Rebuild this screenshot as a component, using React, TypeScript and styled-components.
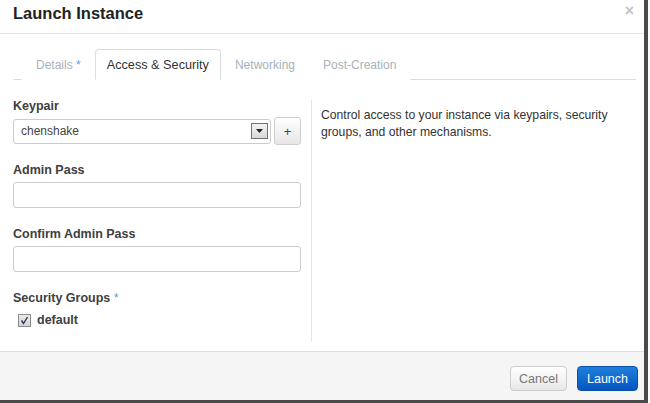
import styled, { createGlobalStyle } from 'styled-components';

const GlobalStyle = createGlobalStyle`
  html, body {
    margin: 0;
    padding: 0;
    background: #ffffff;
  }
  body {
    font-family: "Liberation Sans", Arial, sans-serif;
    color: #333333;
    font-size: 12px;
  }
`;

const Modal = styled.div`
  width: 644px;
  height: 400px;
  background: #ffffff;
  border-right: 4px solid #4a4a4a;
  border-bottom: 3px solid #4a4a4a;
  display: flex;
  flex-direction: column;
  box-sizing: content-box;
`;

const Header = styled.div`
  height: 33px;
  border-bottom: 1px solid #e8e8e8;
  display: flex;
  align-items: center;
  justify-content: space-between;
  padding: 0 10px 0 13px;
`;

const Title = styled.h3`
  margin: 0;
  margin-top: -7px;
  font-size: 16.5px;
  font-weight: bold;
  color: #222222;
`;

const Close = styled.span`
  color: #c4c4c4;
  font-size: 16px;
  font-weight: bold;
  margin-top: -12px;
`;

const Body = styled.div`
  flex: 1;
  padding: 14px 8px 0 13px;
  display: flex;
  flex-direction: column;
`;

const Tabs = styled.div`
  display: flex;
  border-bottom: 1px solid #dddddd;
  padding-left: 9px;
  height: 31px;
  align-items: flex-end;
`;

const Tab = styled.div<{ $active?: boolean }>`
  height: 31px;
  box-sizing: border-box;
  padding: 0 ${({ $active }) => ($active ? '11px' : '13px')};
  display: flex;
  align-items: center;
  font-size: ${({ $active }) => ($active ? '12.7px' : '12px')};
  color: ${({ $active }) => ($active ? '#333333' : '#a8b2b8')};
  background: #ffffff;
  border: 1px solid ${({ $active }) => ($active ? '#dddddd' : '#ffffff')};
  border-bottom: ${({ $active }) => ($active ? '1px solid #ffffff' : 'none')};
  border-radius: 4px 4px 0 0;
  margin-bottom: -1px;
`;

const Columns = styled.div`
  display: flex;
  padding-top: 20px;
  flex: 1;
`;

const FormColumn = styled.div`
  width: 288px;
  padding-right: 10px;
  border-right: 1px solid #e6e6e6;
  height: 242px;
`;

const Field = styled.div`
  margin-bottom: 20px;
`;

const Label = styled.div`
  font-size: 12.5px;
  font-weight: bold;
  color: #404040;
  margin-bottom: 5px;
  height: 13px;
  line-height: 13px;
`;

const Req = styled.span`
  color: #5fa3d6;
  font-weight: normal;
`;

const Row = styled.div`
  display: flex;
  align-items: center;
  gap: 3px;
  height: 26px;
`;

const Select = styled.div`
  flex: 1;
  height: 25px;
  box-sizing: border-box;
  border: 1px solid #cccccc;
  border-radius: 3px;
  display: flex;
  align-items: center;
  justify-content: space-between;
  padding: 0 2px 0 7px;
  font-size: 12px;
  color: #444444;
`;

const Arrow = styled.div`
  width: 17px;
  height: 16px;
  box-sizing: border-box;
  border: 1px solid #707070;
  background: linear-gradient(#f4f4f4, #d8d8d8);
  display: flex;
  align-items: center;
  justify-content: center;
`;

const AddButton = styled.div`
  width: 27px;
  height: 28px;
  margin: -1px 0;
  box-sizing: border-box;
  border: 1px solid #cfcfcf;
  border-radius: 3px;
  background: linear-gradient(#ffffff, #e6e6e6);
  display: flex;
  align-items: center;
  justify-content: center;
  font-size: 13px;
  color: #444444;
`;

const Input = styled.div`
  height: 26px;
  box-sizing: border-box;
  border: 1px solid #cccccc;
  border-radius: 3px;
  background: #ffffff;
`;

const CheckRow = styled.div`
  display: flex;
  align-items: center;
  gap: 6px;
  padding-left: 5px;
  margin-top: 8px;
  font-size: 12.5px;
  font-weight: bold;
  color: #404040;
`;

const Check = styled.div`
  width: 13px;
  height: 13px;
  box-sizing: border-box;
  border: 1px solid #8c8c8c;
  background: linear-gradient(#eaeaea, #d0d4dc);
  display: flex;
  align-items: center;
  justify-content: center;
`;

const HelpColumn = styled.div`
  padding: 7px 0 0 9px;
  font-size: 12.2px;
  line-height: 17px;
  color: #333333;
  width: 305px;
`;

const Footer = styled.div`
  height: 49px;
  box-sizing: border-box;
  border-top: 1px solid #dddddd;
  background: #f5f5f5;
  display: flex;
  align-items: center;
  justify-content: flex-end;
  gap: 10px;
  padding: 5px 6px 0 0;
`;

const Button = styled.div<{ $primary?: boolean }>`
  height: 25px;
  box-sizing: border-box;
  padding: 0 ${({ $primary }) => ($primary ? '9px' : '8px')};
  display: flex;
  align-items: center;
  border-radius: 4px;
  font-size: 12.5px;
  border: 1px solid ${({ $primary }) => ($primary ? '#0a4fa8' : '#cccccc')};
  color: ${({ $primary }) => ($primary ? '#ffffff' : '#777777')};
  background: ${({ $primary }) =>
    $primary ? 'linear-gradient(#1f7fdc, #0556c2)' : 'linear-gradient(#ffffff, #e8e8e8)'};
`;

export default function App() {
  return (
    <>
      <GlobalStyle />
      <Modal>
        <Header>
          <Title>Launch Instance</Title>
          <Close>×</Close>
        </Header>
        <Body>
          <Tabs>
            <Tab>Details <Req>&nbsp;*</Req></Tab>
            <Tab $active>Access &amp; Security</Tab>
            <Tab>Networking</Tab>
            <Tab>Post-Creation</Tab>
          </Tabs>
          <Columns>
            <FormColumn>
              <Field>
                <Label>Keypair</Label>
                <Row>
                  <Select>
                    chenshake
                    <Arrow>
                      <svg width="7" height="4" viewBox="0 0 7 4">
                        <path d="M0 0h7L3.5 4z" fill="#222" />
                      </svg>
                    </Arrow>
                  </Select>
                  <AddButton>+</AddButton>
                </Row>
              </Field>
              <Field>
                <Label>Admin Pass</Label>
                <Input />
              </Field>
              <Field>
                <Label>Confirm Admin Pass</Label>
                <Input />
              </Field>
              <Field>
                <Label>
                  Security Groups <Req>*</Req>
                </Label>
                <CheckRow>
                  <Check>
                    <svg width="9" height="9" viewBox="0 0 9 9">
                      <path d="M1.5 4.5l2 3L7.5 1" fill="none" stroke="#2a3550" strokeWidth="1.4" />
                    </svg>
                  </Check>
                  default
                </CheckRow>
              </Field>
            </FormColumn>
            <HelpColumn>
              Control access to your instance via keypairs, security groups, and other mechanisms.
            </HelpColumn>
          </Columns>
        </Body>
        <Footer>
          <Button>Cancel</Button>
          <Button $primary>Launch</Button>
        </Footer>
      </Modal>
    </>
  );
}
